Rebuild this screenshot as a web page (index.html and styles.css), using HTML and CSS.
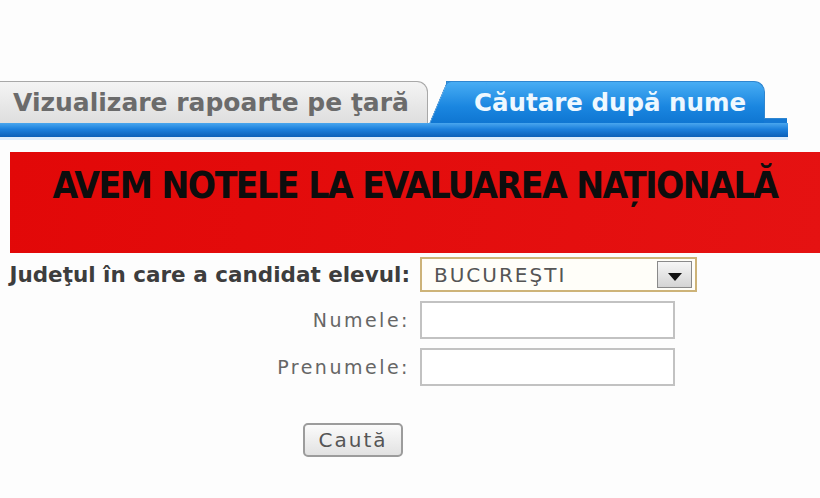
FILE: index.html
```html
<!DOCTYPE html>
<html lang="ro">
<head>
  <meta charset="UTF-8" />
  <meta name="viewport" content="width=device-width, initial-scale=1.0" />
  <title>Evaluarea Națională - Căutare după nume</title>
  <link rel="stylesheet" href="styles.css">
</head>
<body>
  <nav class="tabs">
    <div class="tab">Vizualizare rapoarte pe ţară</div>
    <div class="tab tab-active">Căutare după nume</div>
  </nav>
  <div class="tab-line"></div>

  <div class="banner">
    <h1>AVEM NOTELE LA EVALUAREA NAȚIONALĂ</h1>
  </div>

  <form class="search">
    <label class="label-strong">Judeţul în care a candidat elevul:</label>
    <div class="select">
      <span>BUCUREŞTI</span>
      <span class="select-btn">
        <svg width="14" height="8" viewBox="0 0 14 8"><path d="M0 0h14L7 8z" fill="#111"/></svg>
      </span>
    </div>
    <label>Numele:</label>
    <input type="text" class="field" />
    <label>Prenumele:</label>
    <input type="text" class="field" />
  </form>

  <button type="button" class="btn">Caută</button>
</body>
</html>
```

FILE: styles.css
```css
* { box-sizing: border-box; margin: 0; padding: 0; }
body { background: #fdfdfd; color: #444; font-family: 'DejaVu Sans', Verdana, sans-serif; }

.tabs { display: flex; align-items: flex-end; padding-top: 81px; height: 123px; }
.tab {
  height: 42px;
  width: 430px;
  margin-left: -2px;
  padding: 6px 0 0 14px;
  background: linear-gradient(#f4f4f4, #dedede);
  border: 1px solid #a8a8a8;
  border-bottom: none;
  border-radius: 0 11px 0 0;
  color: #6b6b6b;
  font-weight: bold;
  font-size: 25px;
  white-space: nowrap;
}
.tab-active {
  position: relative;
  z-index: 0;
  width: 319px;
  margin-left: 18px;
  padding-left: 27px;
  background: linear-gradient(#48adf4, #1a86e0 60%, #0f76d2);
  border: 1px solid #2f86d0;
  border-bottom: none;
  color: #eef8ff;
  font-size: 24.5px;
}
.tab-active::before {
  content: "";
  position: absolute;
  z-index: -1;
  left: -9px; top: -1px; bottom: 0;
  width: 40px;
  background: linear-gradient(#48adf4, #1a86e0 60%, #0f76d2);
  border-top: 1px solid #2f86d0;
  border-left: 1px solid #2f86d0;
  border-radius: 5px 0 0 0;
  transform: skewX(-23deg);
}
.tab-active::after {
  content: "";
  position: absolute;
  left: 100%; bottom: 0;
  width: 23px; height: 4px;
  background: #1478d4;
  border-top: 1px solid #2f86d0;
}
.tab-line {
  width: 788px;
  height: 14px;
  background: linear-gradient(#49a6ee, #1b7fdc 45%, #0a5fb8);
  border-bottom: 3px solid #dcecfb;
  box-sizing: content-box;
}

.banner {
  margin: 12px 0 0 10px;
  height: 101px;
  background: linear-gradient(100deg, #e20808, #e51212);
  text-align: center;
  padding-top: 12px;
}
.banner h1 {
  font-family: 'Liberation Sans Narrow', 'DejaVu Sans Condensed', 'Liberation Sans', sans-serif;
  font-weight: bold;
  font-size: 37px;
  line-height: 44px;
  letter-spacing: -1.5px;
  color: #0d0d0d;
}

.search {
  display: grid;
  grid-template-columns: 410px auto;
  column-gap: 10px;
  row-gap: 9px;
  align-items: center;
  margin-top: 4px;
}
.search label { text-align: right; font-size: 19px; letter-spacing: 2.5px; color: #666; white-space: nowrap; }
.search .label-strong { font-weight: bold; color: #3d3d3d; font-size: 21.5px; letter-spacing: 0; }

.select {
  width: 277px;
  height: 35px;
  display: flex;
  align-items: center;
  justify-content: space-between;
  padding: 0 3px 0 12px;
  border: 2px solid #cdb378;
  background: #fffef9;
  color: #555;
  font-size: 20px;
  letter-spacing: 2px;
}
.select-btn {
  width: 35px;
  height: 27px;
  display: flex;
  align-items: flex-end;
  justify-content: center;
  padding-bottom: 6px;
  background: linear-gradient(#f6f6f6, #d4d4d4);
  border: 1px solid #8a8a8a;
}
.field {
  width: 255px;
  height: 38px;
  border: 2px solid #c2c2c2;
  background: #fff;
}

.btn {
  display: block;
  margin: 37px 0 0 303px;
  width: 100px;
  height: 34px;
  border: 2px solid #9c9c9c;
  border-radius: 5px;
  background: linear-gradient(#fbfbfb, #e2e2e2);
  color: #555;
  font-family: 'DejaVu Sans', Verdana, sans-serif;
  font-size: 20px;
  letter-spacing: 2px;
}
```
